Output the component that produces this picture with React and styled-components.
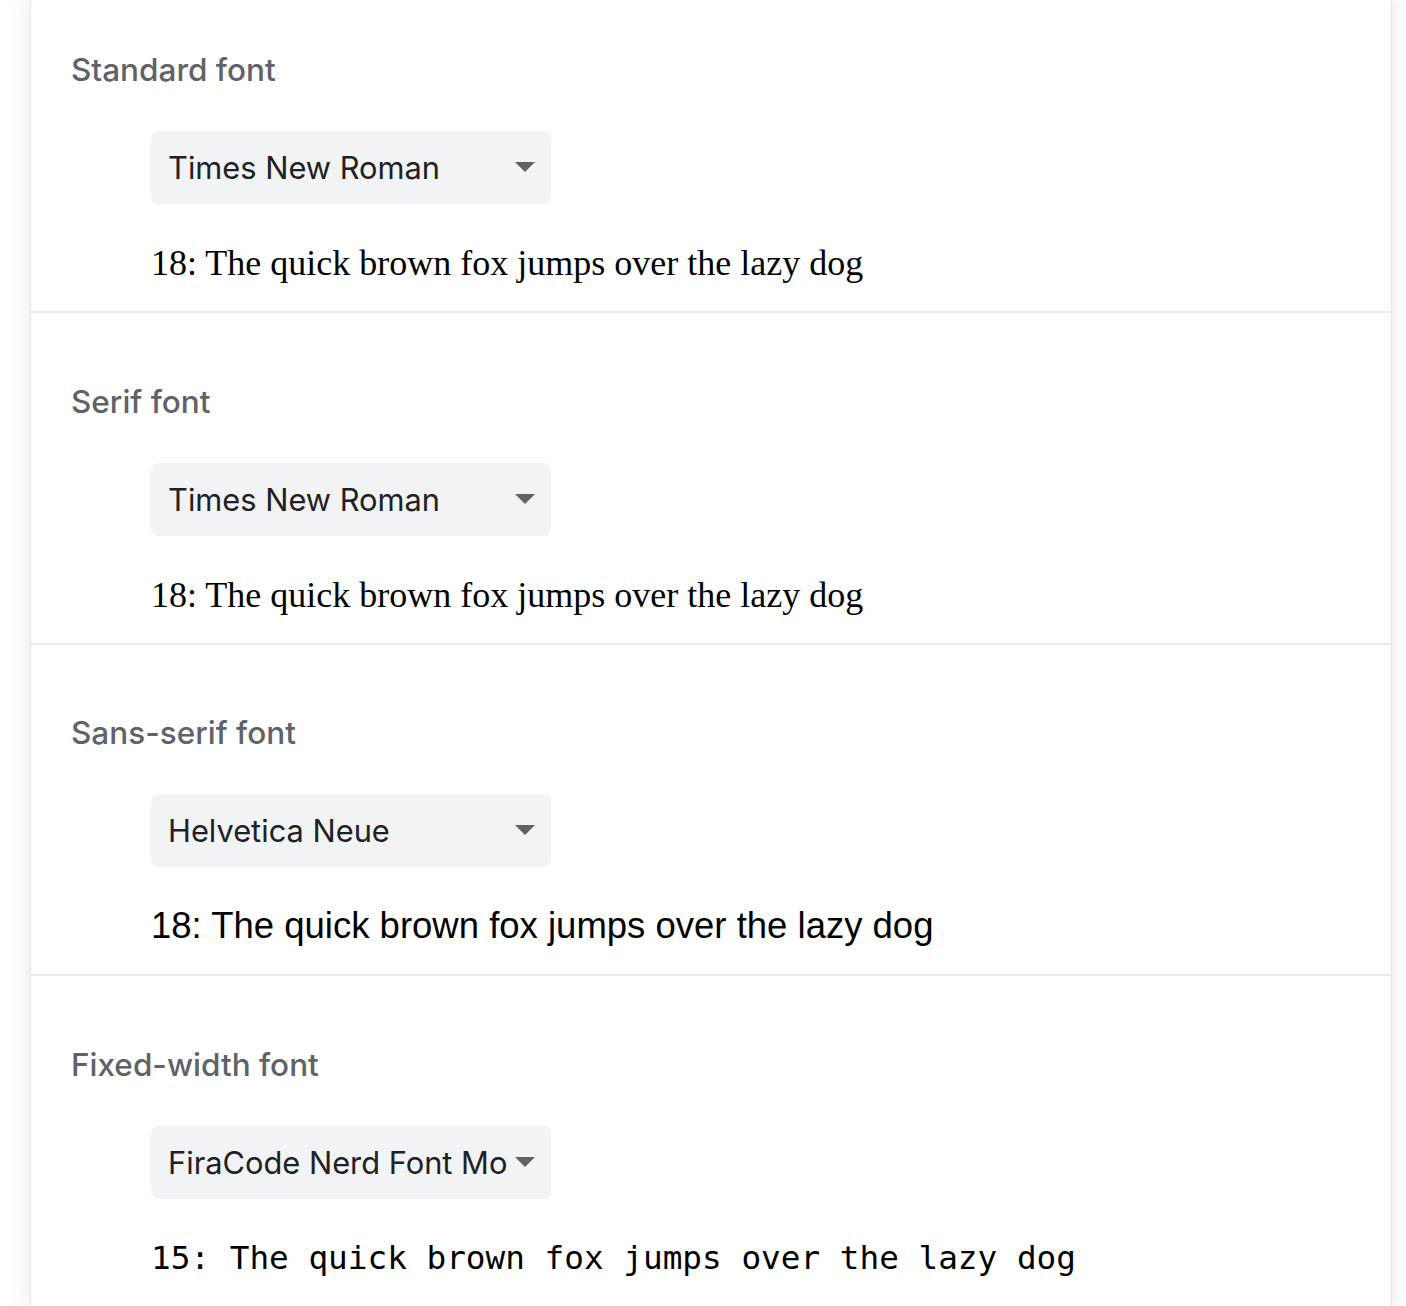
import styled, { createGlobalStyle } from "styled-components"

const Global = createGlobalStyle`
  html, body {
    margin: 0;
    padding: 0;
    background: #ffffff;
    overflow: hidden;
  }
`

const fonts = [
  {
    label: "Standard font",
    value: "Times New Roman",
    sample: "18: The quick brown fox jumps over the lazy dog",
    kind: "serif",
  },
  {
    label: "Serif font",
    value: "Times New Roman",
    sample: "18: The quick brown fox jumps over the lazy dog",
    kind: "serif",
  },
  {
    label: "Sans-serif font",
    value: "Helvetica Neue",
    sample: "18: The quick brown fox jumps over the lazy dog",
    kind: "sans",
  },
  {
    label: "Fixed-width font",
    value: "FiraCode Nerd Font Mono",
    sample: "15: The quick brown fox jumps over the lazy dog",
    kind: "mono",
  },
]

const sampleFonts = {
  serif: `font-family: "Liberation Serif", "Times New Roman", serif; font-size: 36px;`,
  sans: `font-family: "Liberation Sans", Arial, sans-serif; font-size: 36.5px;`,
  mono: `font-family: "DejaVu Sans Mono", monospace; font-size: 32.7px;`,
}

const App = () => {
  return (
    <>
      <Global />
      <Card>
        {fonts.map((f, i) => (
          <Section key={f.label} $first={i === 0}>
            <Label>{f.label}</Label>
            <Select title={f.value}>
              <SelectText>{f.value}</SelectText>
              <Arrow />
            </Select>
            <Sample $kind={f.kind}>{f.sample}</Sample>
          </Section>
        ))}
      </Card>
    </>
  )
}

export default App

const Card = styled.div`
  margin: 0 15px 0 31px;
  background: #ffffff;
  box-shadow: 0 0 1px 0 rgba(60, 64, 67, 0.45), 0 0 18px 2px rgba(60, 64, 67, 0.12);
  font-family: Inter, "Noto Sans", sans-serif;
`

const Section = styled.div`
  display: flex;
  flex-direction: column;
  align-items: flex-start;
  padding: ${(p) => (p.$first ? "45px" : "63.5px")} 40px 26px;
  border-bottom: 2px solid #ebebeb;
`

const Label = styled.div`
  font-size: 31.5px;
  font-weight: 500;
  line-height: 50px;
  color: #5f6368;
`

const Select = styled.div`
  margin: 36px 0 0 80px;
  width: 400px;
  height: 73px;
  box-sizing: border-box;
  padding: 0 16px 0 17px;
  display: flex;
  align-items: center;
  background: #f1f3f4;
  border-radius: 8px;
`

const SelectText = styled.span`
  flex: 1;
  min-width: 0;
  overflow: hidden;
  white-space: nowrap;
  font-size: 30.8px;
  color: #202124;
  margin-right: 7px;
`

const Arrow = styled.span`
  width: 0;
  height: 0;
  border-left: 10px solid transparent;
  border-right: 10px solid transparent;
  border-top: 10px solid #5f6368;
  margin-top: -1px;
`

const Sample = styled.div`
  margin: 37px 0 0 80px;
  line-height: 44px;
  color: #000000;
  white-space: nowrap;
  ${(p) => sampleFonts[p.$kind]}
`
